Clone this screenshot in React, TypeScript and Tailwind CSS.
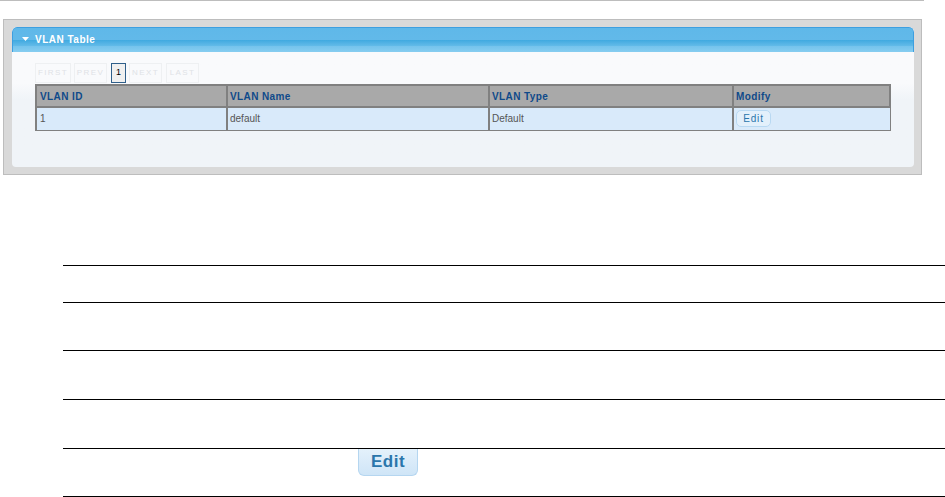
import React from 'react';

const PageButton: React.FC<{ label: string; width: string }> = ({ label, width }) => (
  <div className={`${width} h-[20px] flex items-center justify-center border border-[#eef0f2] text-[8px] tracking-[1.4px] text-[#dfe2e6]`}>
    {label}
  </div>
);

const VlanPanel: React.FC = () => (
  <div className="ml-[3px] mt-[18px] w-[919px] h-[156px] border border-[#bdbdbd] bg-[#d9d9d9] pt-[7px] pl-[8px]">
    <div className="w-[902px] h-[140px] rounded-t-[5px] rounded-b-[4px] overflow-hidden bg-gradient-to-b from-[#f9fafc] from-40% to-[#f0f4f8] to-52%">
      <div className="h-[25px] border border-b-0 border-[#3d9fe0] rounded-t-[5px] bg-gradient-to-b from-[#5fb8e9] via-[#62b9e9] to-[#86cdf0] relative">
        <div className="absolute left-0 right-0 top-[12px] h-[6px] bg-gradient-to-b from-[#3fa9e0] to-[#63bbe9]" />
        <div className="relative flex items-center h-[22px] pl-[9px] text-white text-[10px] font-bold tracking-[0.5px]">
          <svg width="7" height="4" viewBox="0 0 7 4" className="mr-[6px]">
            <polygon points="0,0 7,0 3.5,4" fill="#ffffff" />
          </svg>
          VLAN Table
        </div>
      </div>
      <div className="pl-[23px] pt-[11px]">
        <div className="flex h-[20px]">
          <PageButton label="FIRST" width="w-[36px]" />
          <div className="w-[3px]" />
          <PageButton label="PREV" width="w-[33px]" />
          <div className="w-[4px]" />
          <div className="w-[15px] h-[20px] flex items-center justify-center border border-[#2f5f8a] bg-[#f0f0f0] text-[9px] text-black">1</div>
          <div className="w-[3px]" />
          <PageButton label="NEXT" width="w-[33px]" />
          <div className="w-[4px]" />
          <PageButton label="LAST" width="w-[33px]" />
        </div>
        <table className="mt-[1px] w-[856px] table-fixed border-collapse text-[10px]">
          <thead>
            <tr className="h-[22px] bg-[#a9a9a9] text-left text-[#0f4a8a] font-bold tracking-[0.4px]">
              <th className="w-[191px] border-2 border-[#808080] pl-[3px] font-bold">VLAN ID</th>
              <th className="w-[262px] border-2 border-[#808080] pl-[2px] font-bold">VLAN Name</th>
              <th className="w-[244px] border-2 border-[#808080] pl-[2px] font-bold">VLAN Type</th>
              <th className="border-2 border-[#808080] pl-[2px] font-bold">Modify</th>
            </tr>
          </thead>
          <tbody>
            <tr className="h-[23px] bg-[#d9eafa] text-[#555555]">
              <td className="border-2 border-b-1 border-[#808080] pl-[3px]">1</td>
              <td className="border-2 border-b-1 border-[#808080] pl-[2px]">default</td>
              <td className="border-2 border-b-1 border-[#808080] pl-[2px]">Default</td>
              <td className="border-2 border-b-1 border-r-1 border-[#808080] pl-[2px]">
                <div className="w-[35px] h-[17px] flex items-center justify-center rounded-[5px] border border-[#b9d9f2] bg-[#e3f0fb] text-[#2a76ab] tracking-[0.8px]">Edit</div>
              </td>
            </tr>
          </tbody>
        </table>
      </div>
    </div>
  </div>
);

const App: React.FC = () => (
  <div className="relative w-[945px] h-[497px] overflow-hidden bg-white font-['Liberation_Sans',sans-serif]">
    <div className="w-[924px] h-px bg-[#bdbdbd]" />
    <VlanPanel />
    <div className="ml-[63px] mt-[90px]">
      <div className="h-[37px] border-t border-black" />
      <div className="h-[48px] border-t border-black" />
      <div className="h-[49px] border-t border-black" />
      <div className="h-[49px] border-t border-black" />
      <div className="h-[48px] border-t border-black pl-[295px]">
        <div className="w-[60px] h-[27px] flex items-center justify-center rounded-b-[6px] border border-t-0 border-[#b5d6f0] bg-gradient-to-b from-[#e4f1fb] to-[#cfe5f7] text-[#2a76ab] text-[17px] font-bold tracking-[0.5px]">Edit</div>
      </div>
      <div className="border-t border-black" />
    </div>
  </div>
);

export default App;
